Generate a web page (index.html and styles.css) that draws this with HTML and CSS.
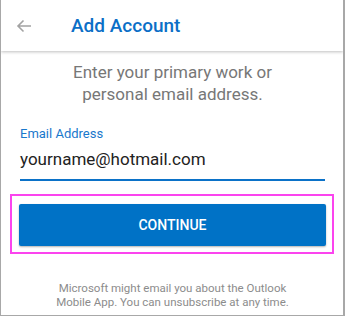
FILE: index.html
```html
<!DOCTYPE html>
<html>
<head>
<meta charset="utf-8">
<link rel="stylesheet" href="styles.css">
</head>
<body>
<div class="frame">
  <header class="bar">
    <svg class="back" width="16" height="14" viewBox="0 0 16 14">
      <path d="M15 7H2M7.5 1.5L2 7l5.5 5.5" fill="none" stroke="#a3a3a3" stroke-width="1.6"/>
    </svg>
    <h1 class="title">Add Account</h1>
  </header>
  <main class="content">
    <p class="intro">Enter your primary work or<br>personal email address.</p>
    <div class="field">
      <div class="label">Email Address</div>
      <div class="value">yourname@hotmail.com</div>
    </div>
    <div class="highlight">
      <button class="btn">CONTINUE</button>
    </div>
    <p class="note">Microsoft might email you about the Outlook<br>Mobile App. You can unsubscribe at any time.</p>
  </main>
</div>
</body>
</html>
```
FILE: styles.css
```css
* { box-sizing: border-box; }
html, body { margin: 0; padding: 0; background: #fff; }
body { font-family: Roboto, "Noto Sans", sans-serif; }
.frame {
  width: 345px;
  height: 316px;
  border-left: 1px solid #a8a8a8;
  border-right: 2px solid #a8a8a8;
  border-bottom: 1px solid #a8a8a8;
  overflow: hidden;
}
.bar {
  height: 51px;
  display: flex;
  align-items: center;
  box-shadow: 0 1px 3px rgba(0,0,0,0.25);
  position: relative;
}
.back { margin-left: 15px; margin-top: 1px; }
.title {
  margin: 0 0 0 39px;
  font-size: 19px;
  font-weight: 500;
  color: #0b6fc7;
  letter-spacing: 0;
}
.content { padding: 0 18px 0 19px; }
.intro {
  margin: 10px 0 0;
  text-align: center;
  font-size: 17px;
  line-height: 22px;
  color: #777;
}
.field {
  margin-top: 21px;
  border-bottom: 2px solid #0b72c8;
  padding-bottom: 9px;
}
.label {
  font-size: 13px;
  line-height: 16px;
  color: #1a78cc;
}
.value {
  margin-top: 6px;
  font-size: 17px;
  line-height: 22px;
  color: #222;
}
.highlight {
  margin: 13px -9px 0 -10px;
  border: 2px solid #fb44ee;
  padding: 8px 6px 6px 7px;
}
.btn {
  display: block;
  width: 100%;
  height: 42px;
  border: 0;
  border-radius: 2px;
  background: #0072c6;
  color: #fff;
  font-family: Roboto, "Noto Sans", sans-serif;
  font-size: 14px;
  font-weight: 500;
  box-shadow: 0 1px 2px rgba(0,0,0,0.3);
}
.note {
  margin: 28px 0 0;
  text-align: center;
  font-size: 11.5px;
  line-height: 13.5px;
  color: #8c8c8c;
}
```
